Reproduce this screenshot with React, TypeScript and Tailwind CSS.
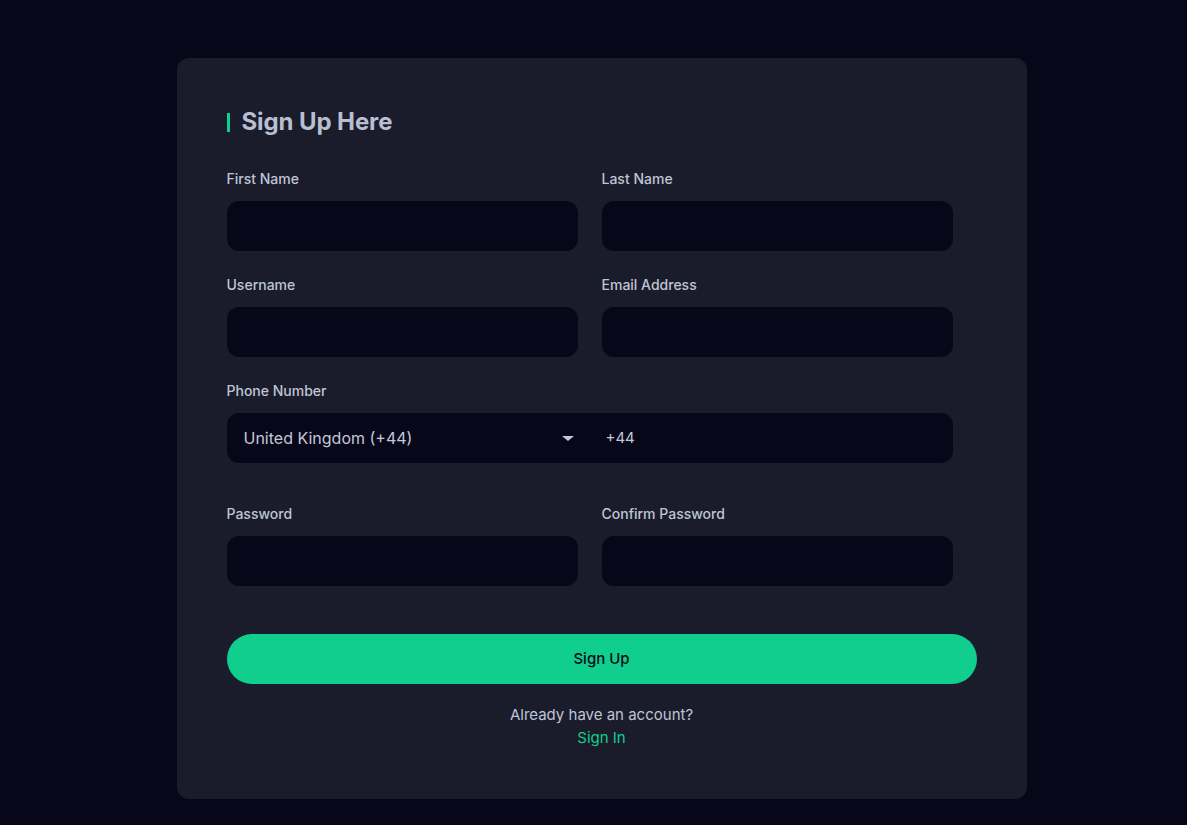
import React from "react";

function Field({ label, extra = "" }: { label: string; extra?: string }) {
  return (
    <div className="flex flex-col">
      <label className={`text-[14px] leading-5 font-medium text-[#bfc5d6] ${extra}`}>{label}</label>
      <div className="mt-3 h-[50px] rounded-[12px] bg-[#08071a]" />
    </div>
  );
}

export default function App() {
  return (
    <div
      className="min-h-[825px] w-full bg-[#08071a] flex justify-center pt-[58px] pl-[16px]"
      style={{ fontFamily: "Inter, 'Noto Sans', sans-serif" }}
    >
      <div className="w-[850px] h-[741px] rounded-[12px] bg-[#1b1c2b] px-[50px] pt-[48px]">
        <div className="flex items-center h-8">
          <div className="w-[3px] h-[19px] bg-[#10cf8e]" />
          <h1 className="ml-[12px] text-[24px] font-bold text-[#b7bfd0] tracking-[-0.1px]">Sign Up Here</h1>
        </div>
        <div className="mt-[31px] w-[726px] grid grid-cols-2 gap-x-6 gap-y-[24px]">
          <Field label="First Name" />
          <Field label="Last Name" />
          <Field label="Username" />
          <Field label="Email Address" />
          <div className="col-span-2 flex flex-col">
            <label className="text-[14px] leading-5 font-medium text-[#bfc5d6]">Phone Number</label>
            <div className="mt-3 h-[50px] rounded-[12px] bg-[#08071a] flex items-center">
              <div className="w-[375px] flex items-center pl-[17px] pr-[28px]">
                <span className="text-[16px] text-[#c3c8d9] flex-1">United Kingdom (+44)</span>
                <svg width="12" height="5" viewBox="0 0 12 5">
                  <path d="M0 0 L12 0 L6 5 Z" fill="#c3c8d9" />
                </svg>
              </div>
              <span className="ml-[4px] text-[15px] text-[#c3c8d9]">+44</span>
            </div>
          </div>
        </div>
        <div className="mt-[41px] w-[726px] grid grid-cols-2 gap-x-6">
          <Field label="Password" />
          <Field label="Confirm Password" />
        </div>
        <button className="mt-[48px] w-full h-[50px] rounded-full bg-[#10cf8e] text-[15px] font-medium text-[#0b0c18]">
          Sign Up
        </button>
        <div className="mt-[19px] flex flex-col items-center text-[15px] leading-[23px]">
          <span className="text-[#bfc5d6]">Already have an account?</span>
          <a className="text-[#10cf8e]">Sign In</a>
        </div>
      </div>
    </div>
  );
}
